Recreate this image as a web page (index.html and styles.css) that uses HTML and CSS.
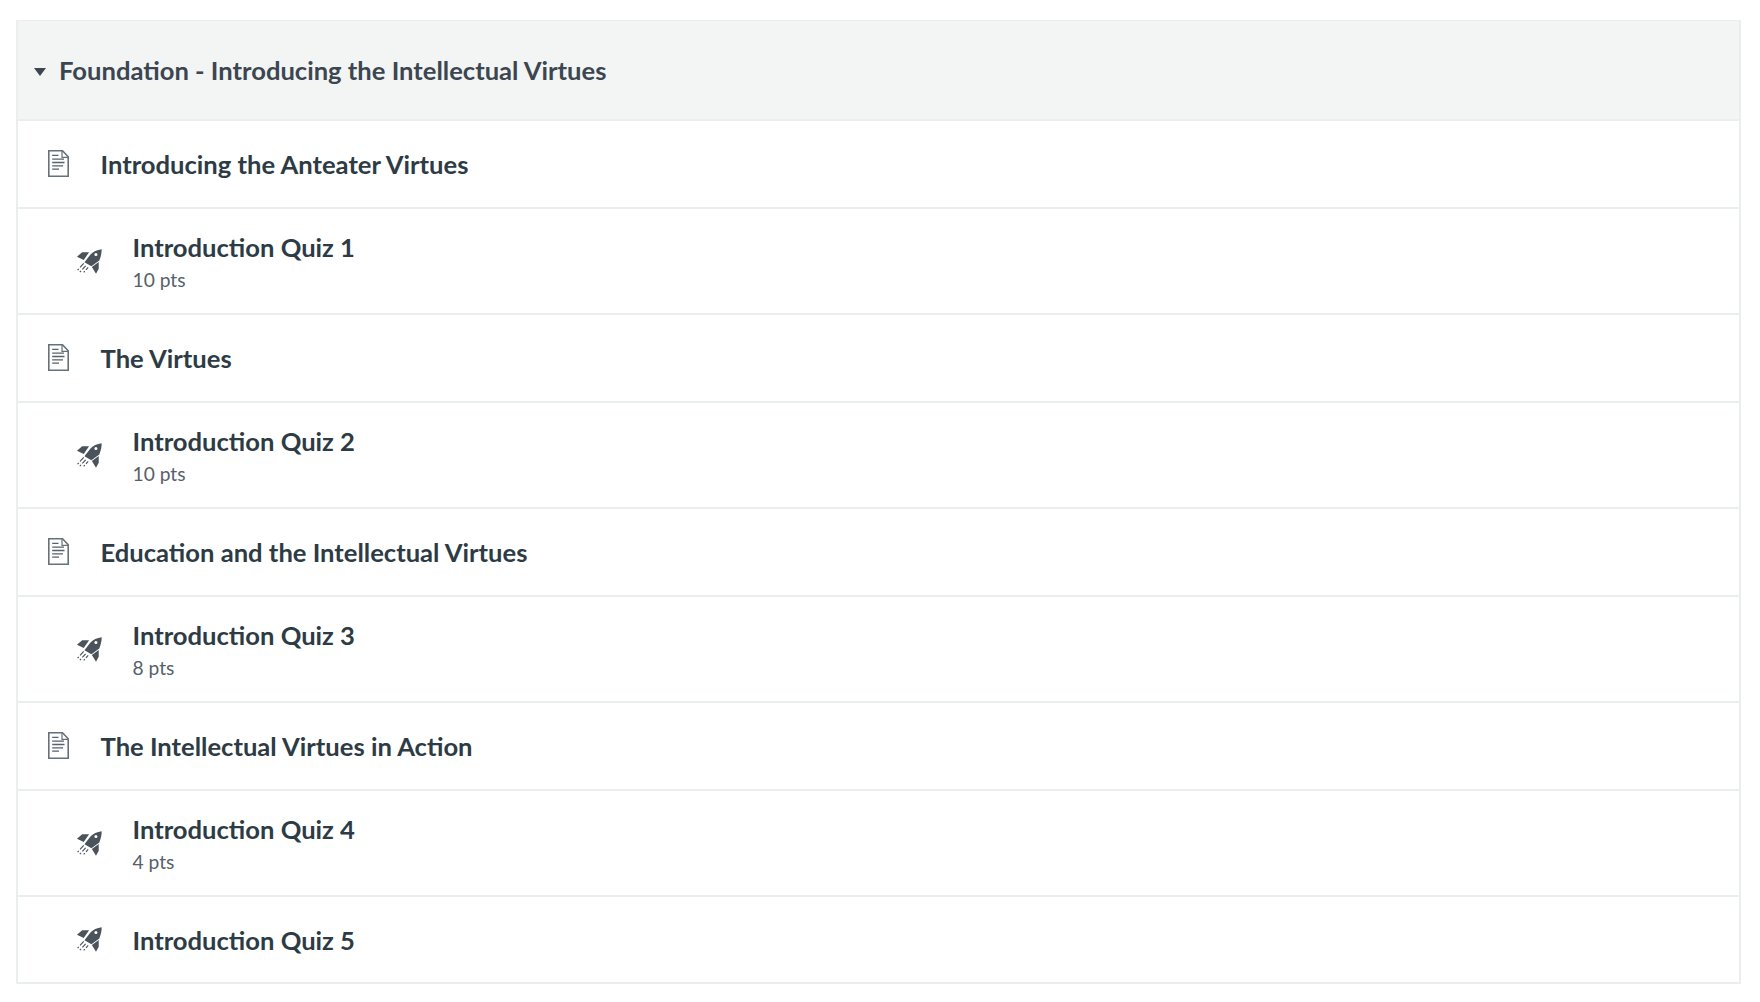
FILE: index.html
```
<!DOCTYPE html>
<html lang="en">
<head>
<meta charset="utf-8">
<title>Modules</title>
<link rel="stylesheet" href="styles.css">
</head>
<body>
<svg class="defs" width="0" height="0" aria-hidden="true">
  <symbol id="doc" viewBox="0 0 21 27">
    <path d="M.8 .8H14.5L20.2 6.8V26.2H.8Z" fill="none" stroke="#66717b" stroke-width="1.6"/>
    <path d="M14 1V7.3H20" fill="none" stroke="#66717b" stroke-width="1.2"/>
    <path d="M4.2 5.4H10.5M4.2 9.2H16M4.2 12.5H16.5M4.2 15.8H15M4.2 19.2H11" fill="none" stroke="#56616b" stroke-width="1.3"/>
  </symbol>
  <symbol id="rocket" viewBox="0 0 27 26">
    <path fill="#4a535c" fill-rule="evenodd" d="M26.7 .3C22 .8 17.5 2.8 14.8 6L8.8 13.7 16 18 24.2 12C25.9 8 26.7 4 26.7 .3ZM20.7 4.2A1.6 1.6 0 1 1 20.7 7.4 1.6 1.6 0 0 1 20.7 4.2Z"/>
    <path fill="#4a535c" d="M1 8 6.4 3.4H13.6L8 11.4ZM16.5 18.7 23.6 13.5V20.5L20.8 25.8Z"/>
    <path fill="none" stroke="#4a535c" stroke-width="1.2" d="M8 15 4.2 19.2M2.9 20.6 1.6 22M10 17.5 6.6 21.3M5.2 22.8 4 24.1M12.6 19.2 10.4 21.7M9.1 23.1 8 24.4"/>
  </symbol>
</svg>
<main class="module">
  <h2 class="module-head"><span class="caret"></span>Foundation - Introducing the Intellectual Virtues</h2>
  <ul class="items">
    <li class="item page"><svg class="ico-doc"><use href="#doc"/></svg><div class="title">Introducing the Anteater Virtues</div></li>
    <li class="item quiz"><svg class="ico-rocket"><use href="#rocket"/></svg><div><div class="title">Introduction Quiz 1</div><div class="pts">10 pts</div></div></li>
    <li class="item page"><svg class="ico-doc"><use href="#doc"/></svg><div class="title">The Virtues</div></li>
    <li class="item quiz"><svg class="ico-rocket"><use href="#rocket"/></svg><div><div class="title">Introduction Quiz 2</div><div class="pts">10 pts</div></div></li>
    <li class="item page"><svg class="ico-doc"><use href="#doc"/></svg><div class="title">Education and the Intellectual Virtues</div></li>
    <li class="item quiz"><svg class="ico-rocket"><use href="#rocket"/></svg><div><div class="title">Introduction Quiz 3</div><div class="pts">8 pts</div></div></li>
    <li class="item page"><svg class="ico-doc"><use href="#doc"/></svg><div class="title">The Intellectual Virtues in Action</div></li>
    <li class="item quiz"><svg class="ico-rocket"><use href="#rocket"/></svg><div><div class="title">Introduction Quiz 4</div><div class="pts">4 pts</div></div></li>
    <li class="item quiz single"><svg class="ico-rocket"><use href="#rocket"/></svg><div><div class="title">Introduction Quiz 5</div></div></li>
  </ul>
</main>
</body>
</html>
```
FILE: styles.css
```
* { box-sizing: border-box; }
html, body { margin: 0; background: #fff; }
body {
  padding: 20px 19px 0 16px;
  font-family: Lato, "Open Sans", sans-serif;
  color: #2d3b45;
}
.defs { position: absolute; }
.module { border: 2px solid #ebeeef; border-width: 1px 2px 2px 2px; }
.module-head {
  margin: 0;
  height: 98px;
  background: #f3f5f5;
  display: flex;
  align-items: center;
  padding-left: 16px;
  font-size: 25.6px;
  font-weight: 700;
  color: #3c4650;
}
.caret {
  width: 0; height: 0;
  border-left: 6px solid transparent;
  border-right: 6px solid transparent;
  border-top: 8px solid #3c4650;
  margin-right: 13px;
  margin-top: 4px;
}
.items { list-style: none; margin: 0; padding: 0; }
.item { display: flex; align-items: center; border-top: 2px solid #ebeeef; }
.page { height: 88px; padding-left: 30px; }
.quiz { height: 106px; padding-left: 58px; }
.single { height: 87px; }
.ico-doc { width: 21px; height: 27px; margin-right: 31.5px; margin-top: -1px; }
.ico-rocket { width: 26px; height: 25px; margin-right: 30.5px; }
.title { font-size: 25.6px; font-weight: 700; line-height: 34px; }
.pts { font-size: 19.2px; line-height: 26px; color: #56606a; margin-top: 3px; }
```
